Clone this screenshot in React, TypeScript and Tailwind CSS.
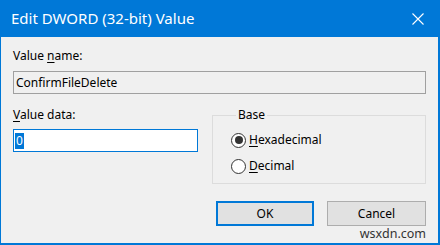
import React from "react";

const font = { fontFamily: '"Noto Sans", "Open Sans", Arial, sans-serif' };

function Radio({ checked }: { checked: boolean }) {
  return (
    <span className="flex h-[15px] w-[15px] items-center justify-center rounded-full border border-[#333333] bg-white">
      {checked && <span className="h-[8px] w-[8px] rounded-full bg-[#333333]" />}
    </span>
  );
}

export default function App() {
  return (
    <div
      className="flex h-[245px] w-[440px] flex-col bg-[#0078d7] pb-[2px] pl-[1px] pr-[2px] text-[12px] text-black"
      style={font}
    >
      <div className="flex h-[37px] items-center justify-between pl-[10px] pr-[14px] text-white">
        <span className="text-[15px] leading-none">Edit DWORD (32-bit) Value</span>
        <svg width="12" height="12" viewBox="0 0 12 12" className="mt-[1px]">
          <path d="M0.5 0.5 L11.5 11.5 M11.5 0.5 L0.5 11.5" stroke="white" strokeWidth="1.1" />
        </svg>
      </div>
      <div className="flex flex-1 flex-col bg-[#f0f0f0] px-[12px] pt-[11px]">
        <div className="leading-[16px]">
          Value <u className="underline-offset-2">n</u>ame:
        </div>
        <div className="mt-[7px] flex h-[23px] items-center border border-[#a0a0a0] bg-[#f0f0f0] pl-[2px] leading-none">
          ConfirmFileDelete
        </div>
        <div className="mt-[13px] flex gap-[14px]">
          <div className="flex w-[185px] flex-col">
            <div className="leading-[16px]">
              <u className="underline-offset-2">V</u>alue data:
            </div>
            <div className="mt-[6px] flex h-[23px] items-center border border-[#0078d7] bg-white pl-[1px]">
              <span className="bg-[#0078d7] px-[1px] leading-[16px] text-white">0</span>
            </div>
          </div>
          <fieldset className="flex h-[77px] flex-1 flex-col border border-[#dcdcdc] pl-[18px] pt-[9px]">
            <legend className="ml-[5px] px-[2px] leading-[16px]">Base</legend>
            <label className="flex items-center gap-[3px] leading-[16px]">
              <Radio checked />
              <span>
                <u className="underline-offset-2">H</u>exadecimal
              </span>
            </label>
            <label className="mt-[10px] flex items-center gap-[3px] leading-[16px]">
              <Radio checked={false} />
              <span>
                <u className="underline-offset-2">D</u>ecimal
              </span>
            </label>
          </fieldset>
        </div>
        <div className="mt-[17px] flex justify-end gap-[13px]">
          <button className="h-[25px] w-[98px] border-2 border-[#0078d7] bg-[#e1e1e1] leading-none">OK</button>
          <button className="h-[25px] w-[99px] border border-[#adadad] bg-[#e1e1e1] leading-none">Cancel</button>
        </div>
        <div className="flex justify-end pt-[1px] text-[12.5px] leading-[14px] text-[#333333]">wsxdn.com</div>
      </div>
    </div>
  );
}
